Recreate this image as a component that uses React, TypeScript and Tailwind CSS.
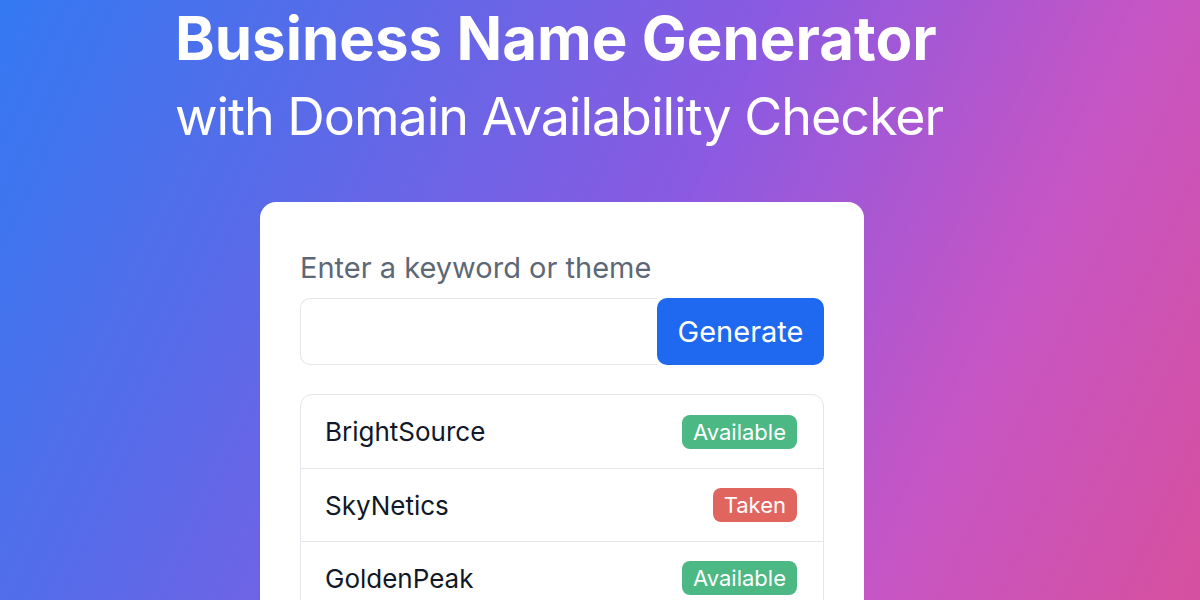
import React from 'react';

const results = [
  { name: 'BrightSource', available: true },
  { name: 'SkyNetics', available: false },
  { name: 'GoldenPeak', available: true },
];

export default function App() {
  return (
    <div
      className="h-[600px] w-[1200px] overflow-hidden bg-[linear-gradient(115deg,#3479f2_0%,#5a6ae8_25%,#8a5ae2_52%,#c655c4_78%,#d6509e_100%)] font-['Inter',sans-serif] text-white"
    >
      <div className="flex flex-col items-start pl-[175px]">
        {/* Heading */}
        <h1 className="mt-[3px] text-[60px] leading-[70px] font-bold">Business Name Generator</h1>
        <h2 className="mt-[13px] text-[52px] leading-[62px] font-normal tracking-[-0.02em]">with Domain Availability Checker</h2>

        {/* Card */}
        <div className="mt-[54px] ml-[85px] w-[604px] h-[460px] rounded-2xl bg-white px-10 pt-[48px]">
          <label className="block text-[29px] leading-[36px] text-[#5d6876]">Enter a keyword or theme</label>

          <div className="mt-[12px] flex h-[67px]">
            <input
              type="text"
              className="flex-1 min-w-0 rounded-l-[10px] border border-r-0 border-[#e3e6ea] bg-white px-4 text-[24px] text-gray-900 outline-none"
            />
            <button className="w-[167px] rounded-[10px] bg-[#1f68f0] text-[29px] text-white">Generate</button>
          </div>

          <div className="mt-[29px] rounded-xl border border-[#e3e6ea]">
            {results.map((r, i) => (
              <div
                key={r.name}
                className={
                  'flex h-[73px] items-center justify-between pl-6 pr-[26px] ' +
                  (i > 0 ? 'border-t border-[#e3e6ea]' : '')
                }
              >
                <span className="text-[26px] text-[#111827]">{r.name}</span>
                <span
                  className={
                    r.available
                      ? 'rounded-lg bg-[#4cb884] px-[11px] py-[2px] text-[22px] leading-[30px] text-white'
                      : 'rounded-lg bg-[#e1655f] px-[11px] py-[2px] text-[22px] leading-[30px] text-white'
                  }
                >
                  {r.available ? 'Available' : 'Taken'}
                </span>
              </div>
            ))}
          </div>
        </div>
      </div>
    </div>
  );
}
